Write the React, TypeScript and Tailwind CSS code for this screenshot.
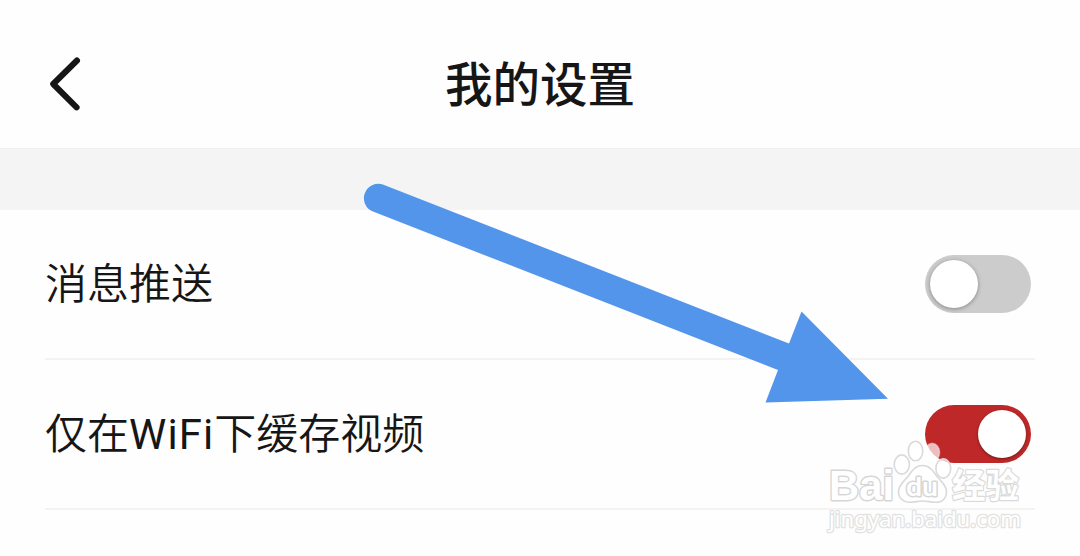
import clsx from "clsx";
import { useState } from "react";

const settings = [
    { name: "消息推送", enabled: false },
    { name: "仅在WiFi下缓存视频", enabled: true },
];

function Toggle({ label, initial }: { label: string; initial: boolean }) {
    const [on, setOn] = useState(initial);

    return (
        <button
            type="button"
            role="switch"
            aria-checked={on}
            aria-label={label}
            onClick={() => setOn((v) => !v)}
            className={clsx(
                "flex h-[58px] w-[106px] items-center rounded-full px-[5px]",
                on ? "justify-end bg-[#be2828]" : "justify-start bg-[#cccccc]"
            )}
        >
            <span
                className={clsx(
                    "size-12 rounded-full bg-white",
                    on ? "shadow-[0_1px_3px_rgba(0,0,0,0.4)]" : "shadow-[0_1px_4px_rgba(0,0,0,0.35)]"
                )}
            />
        </button>
    );
}

function SettingName({ name }: { name: string }) {
    // Latin runs are a touch heavier and wider than the Chinese text
    return (
        <span className="pt-px text-[42px] leading-[60px] font-[350]">
            {name.split(/([A-Za-z]+)/).map((part, index) => (
                <span key={index} className={clsx(/^[A-Za-z]/.test(part) && "font-normal tracking-[1.1px]")}>
                    {part}
                </span>
            ))}
        </span>
    );
}

function Arrow() {
    return (
        <svg viewBox="0 0 1080 556" className="pointer-events-none absolute inset-0 h-[556px] w-[1080px]" fill="#5295ea">
            <path d="M383.5 184.8 789 343.5 801.5 311.5 888 398.8 765.5 402.5 778 370 373 211.5A14.2 14.2 0 0 1 383.5 184.8Z" />
        </svg>
    );
}

function Watermark() {
    return (
        <svg
            viewBox="820 430 220 116"
            className="pointer-events-none absolute top-[430px] left-[820px] h-[116px] w-[220px]"
            fill="#fff"
            fillOpacity="0.7"
            stroke="#dadada"
            strokeWidth="1.6"
            strokeLinejoin="round"
        >
            <ellipse cx="901.8" cy="464.5" rx="7.6" ry="9.6" />
            <ellipse cx="915.5" cy="451" rx="7.2" ry="9.8" />
            <ellipse cx="932.2" cy="452.5" rx="7.4" ry="9.2" stroke="#fff" strokeOpacity="0.4" />
            <ellipse cx="943.3" cy="468.5" rx="7.4" ry="9.6" />
            <path d="M922.5 465.5C915 465.5 911.5 471.5 908 476.5 904 481.5 898.5 485 898.5 491.5 898.5 498.5 903.5 502.3 910 502.3 915 502.3 918 501 922.5 501 927 501 931 502.3 935.5 502.3 942.5 502.3 946.5 498 946.5 491.5 946.5 485.5 941.5 481.5 937.5 477 933.5 471.5 930 465.5 922.5 465.5Z" />
            <g fontWeight="700" paintOrder="stroke" strokeWidth="2.8" stroke="#d6d6d6" fillOpacity="1">
                <text x="829" y="500" fontSize="42" fontFamily="'Liberation Sans', Arial, sans-serif" textLength="65" lengthAdjust="spacingAndGlyphs">
                    Bai
                </text>
                <text x="906" y="496" fontSize="25" fontWeight="500" fontFamily="Roboto, sans-serif" textLength="32" lengthAdjust="spacingAndGlyphs">
                    du
                </text>
            </g>
            <text
                x="952"
                y="498"
                fontSize="34"
                fontWeight="700"
                fontFamily="'Noto Sans CJK SC', sans-serif"
                textLength="67"
                lengthAdjust="spacingAndGlyphs"
                paintOrder="stroke"
                strokeWidth="2.4"
                fillOpacity="1"
            >
                经验
            </text>
            <text
                x="829"
                y="526.5"
                fontSize="22"
                fontFamily="'Noto Sans', sans-serif"
                fontWeight="400"
                textLength="192"
                lengthAdjust="spacingAndGlyphs"
                paintOrder="stroke"
                stroke="#e2e2e2"
                strokeWidth="2.6"
                fillOpacity="1"
            >
                jingyan.baidu.com
            </text>
        </svg>
    );
}

export default function App() {
    return (
        <div className="relative h-[556px] w-[1080px] overflow-hidden bg-[#fefefe] font-[Roboto,'Noto_Sans_CJK_SC',sans-serif] text-[#161616]">
            <header className="grid h-[148px] grid-cols-[1fr_auto_1fr] items-center pt-5">
                <button type="button" aria-label="返回" className="ml-[46px] w-9">
                    <svg viewBox="0 0 36 60" className="h-15 w-9" fill="none" stroke="#161616" strokeWidth="6" strokeLinecap="round" strokeLinejoin="round">
                        <path d="M31 6.5 7.2 30 30.6 53.3" />
                    </svg>
                </button>
                <h1 className="pt-[3px] text-[47.5px] leading-[70px] font-medium">我的设置</h1>
            </header>

            <div className="h-[62px] border-t border-[#efefef] bg-[#f4f4f4]" />

            <ul className="pr-[45px] pl-[45px]">
                {settings.map((item) => (
                    <li key={item.name} className="flex h-[150px] items-center justify-between border-b-2 border-[#f3f3f3] pr-1">
                        <SettingName name={item.name} />
                        <Toggle label={item.name} initial={item.enabled} />
                    </li>
                ))}
            </ul>

            <Arrow />
            <Watermark />
        </div>
    );
}
